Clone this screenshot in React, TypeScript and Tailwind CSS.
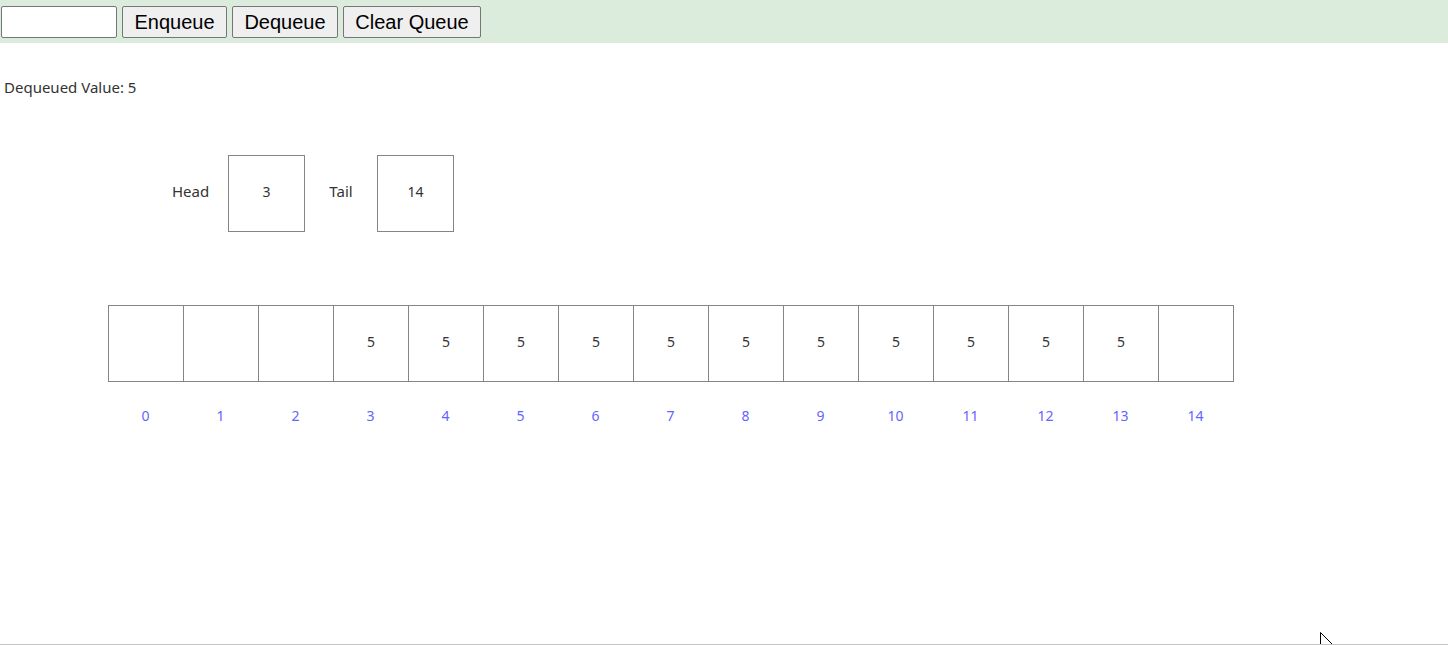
const cells = ['', '', '', '5', '5', '5', '5', '5', '5', '5', '5', '5', '5', '5', '']

export default function App() {
  return (
    <div className="relative h-[645px] overflow-hidden border-b border-[#c4c4c4] bg-white">
      {/* controls */}
      <div className="flex h-[43px] items-start gap-[5px] bg-[#dcecdc] pl-[1px] pt-[6px] font-['Liberation_Sans',Arial,sans-serif] text-[20px] text-black">
        <input
          type="text"
          className="h-[32px] w-[116px] rounded-[2px] border border-[#767676] bg-white px-1 text-[16px] outline-none"
        />
        <button className="flex h-[32px] w-[105px] items-center justify-center rounded-[2px] border border-[#767676] bg-[#efefef]">
          Enqueue
        </button>
        <button className="flex h-[32px] w-[106px] items-center justify-center rounded-[2px] border border-[#767676] bg-[#efefef]">
          Dequeue
        </button>
        <button className="flex h-[32px] w-[138px] items-center justify-center rounded-[2px] border border-[#767676] bg-[#efefef]">
          Clear Queue
        </button>
      </div>

      <div className="font-['Noto_Sans',sans-serif] text-[#333]">
        <p className="mt-[34px] h-[20px] pl-[4px] text-[15px] leading-[20px]">Dequeued Value: 5</p>

        {/* pointers */}
        <div className="mt-[58px] flex h-[77px] items-center pl-[153px] text-[15px]">
          <span className="-mt-[4px] w-[75px] text-center">Head</span>
          <div className="flex h-[77px] w-[77px] items-center justify-center border border-[#858585] pb-[4px] text-[14px]">3</div>
          <span className="-mt-[4px] w-[72px] text-center">Tail</span>
          <div className="flex h-[77px] w-[77px] items-center justify-center border border-[#858585] pb-[4px] text-[14px]">14</div>
        </div>

        {/* array */}
        <div className="mt-[73px] flex pl-[108px]">
          <div className="flex border-y border-l border-[#858585]">
            {cells.map((v, i) => (
              <div key={i} className="flex h-[75px] w-[75px] items-center justify-center border-r border-[#858585] pb-[4px] text-[14px]">
                {v}
              </div>
            ))}
          </div>
        </div>
        <div className="mt-[24px] flex pl-[108px]">
          {cells.map((_, i) => (
            <span key={i} className="h-[20px] w-[75px] text-center text-[14px] leading-[20px] text-[#6464ff]">
              {i}
            </span>
          ))}
        </div>
      </div>

      {/* mouse pointer */}
      <svg className="absolute left-[1319px] top-[631px]" width="16" height="14" viewBox="0 0 16 14">
        <path d="M1.5 1.5 L1.5 14 L14 14 Z" fill="#fff" stroke="#000" strokeWidth="1" />
      </svg>
    </div>
  )
}
